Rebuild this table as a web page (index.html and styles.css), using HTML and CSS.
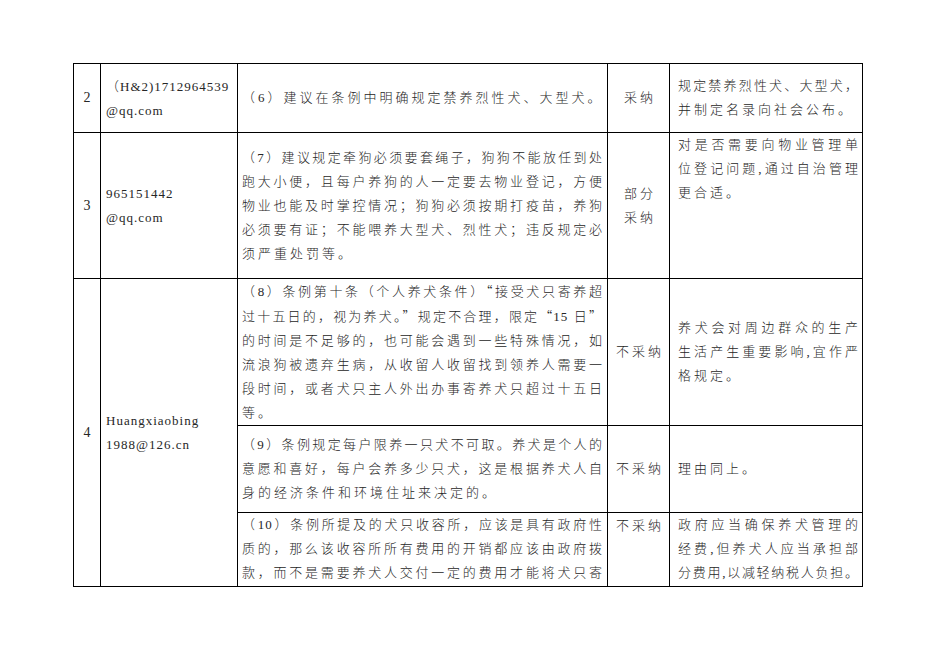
FILE: index.html
```html
<!DOCTYPE html>
<html lang="zh-CN">
<head>
<meta charset="utf-8">
<title>意见采纳情况表</title>
<link rel="stylesheet" href="styles.css">
</head>
<body>
<div class="page">
<table class="grid">
<colgroup>
<col class="c-no"><col class="c-mail"><col class="c-text"><col class="c-res"><col class="c-why">
</colgroup>
<tr class="r-a">
<td class="no">2</td>
<td class="mail"><span class="q">（</span>H&amp;2)1712964539<br>@qq.com</td>
<td class="txt"><span class="ln end">（6）建议在条例中明确规定禁养烈性犬、大型犬。</span></td>
<td class="res">采纳</td>
<td class="why"><span class="ln">规定禁养烈性犬、大型犬，</span><span class="ln end">并制定名录向社会公布。</span></td>
</tr>
<tr class="r-b">
<td class="no">3</td>
<td class="mail">965151442<br>@qq.com</td>
<td class="txt">
<span class="ln">（7）建议规定牵狗必须要套绳子，狗狗不能放任到处</span>
<span class="ln">跑大小便，且每户养狗的人一定要去物业登记，方便</span>
<span class="ln">物业也能及时掌控情况；狗狗必须按期打疫苗，养狗</span>
<span class="ln">必须要有证；不能喂养大型犬、烈性犬；违反规定必</span>
<span class="ln end">须严重处罚等。</span>
</td>
<td class="res">部分<br>采纳</td>
<td class="why top">
<span class="ln">对是否需要向物业管理单</span>
<span class="ln">位登记问题,通过自治管理</span>
<span class="ln end">更合适。</span>
</td>
</tr>
<tr class="r-c">
<td class="no" rowspan="3">4</td>
<td class="mail" rowspan="3">Huangxiaobing<br>1988@126.cn</td>
<td class="txt">
<span class="ln">（8）条例第十条（个人养犬条件）<span class="q">“</span>接受犬只寄养超</span>
<span class="ln">过十五日的，视为养犬。<span class="q">”</span>规定不合理，限定<span class="q">“</span>15 日<span class="q">”</span></span>
<span class="ln">的时间是不足够的，也可能会遇到一些特殊情况，如</span>
<span class="ln">流浪狗被遗弃生病，从收留人收留找到领养人需要一</span>
<span class="ln">段时间，或者犬只主人外出办事寄养犬只超过十五日</span>
<span class="ln end">等。</span>
</td>
<td class="res">不采纳</td>
<td class="why">
<span class="ln">养犬会对周边群众的生产</span>
<span class="ln">生活产生重要影响,宜作严</span>
<span class="ln end">格规定。</span>
</td>
</tr>
<tr class="r-d">
<td class="txt">
<span class="ln">（9）条例规定每户限养一只犬不可取。养犬是个人的</span>
<span class="ln">意愿和喜好，每户会养多少只犬，这是根据养犬人自</span>
<span class="ln end">身的经济条件和环境住址来决定的。</span>
</td>
<td class="res">不采纳</td>
<td class="why"><span class="ln end">理由同上。</span></td>
</tr>
<tr class="r-e">
<td class="txt top">
<span class="ln">（10）条例所提及的犬只收容所，应该是具有政府性</span>
<span class="ln">质的，那么该收容所所有费用的开销都应该由政府拨</span>
<span class="ln">款，而不是需要养犬人交付一定的费用才能将犬只寄</span>
</td>
<td class="res top">不采纳</td>
<td class="why top">
<span class="ln">政府应当确保养犬管理的</span>
<span class="ln">经费,但养犬人应当承担部</span>
<span class="ln">分费用,以减轻纳税人负担。</span>
</td>
</tr>
</table>
</div>
</body>
</html>
```
FILE: styles.css
```css
html, body {
  margin: 0;
  padding: 0;
  background: #ffffff;
}

.page {
  padding: 63px 0 0 73px;
}

.grid {
  border-collapse: collapse;
  table-layout: fixed;
  width: 790px;
  font-family: "Liberation Serif", "Noto Sans CJK SC", serif;
  font-size: 13px;
  font-weight: 300;
  line-height: 24px;
  color: #262626;
}

.c-no { width: 27px; }
.c-mail { width: 137px; }
.c-text { width: 370px; }
.c-res { width: 62px; }
.c-why { width: 193px; }

.grid td {
  border: 1px solid #000;
  padding: 0;
  vertical-align: middle;
  overflow: visible;
}

.r-a { height: 69px; }
.r-b { height: 146px; }
.r-c { height: 147px; }
.r-d { height: 87px; }
.r-e { height: 74px; }

.grid td.top {
  vertical-align: top;
  padding-top: 1px;
}

.no {
  text-align: center;
  font-size: 14px;
  font-weight: 400;
}

.mail {
  padding: 0 2px 0 5px !important;
  font-weight: 400;
  letter-spacing: 1px;
  white-space: nowrap;
}

.txt {
  padding: 0 4px !important;
}

.res {
  text-align: center;
  letter-spacing: 3px;
  padding-left: 3px !important;
}

.why {
  padding: 0 3px 0 8px !important;
}

.ln {
  display: block;
  white-space: nowrap;
  letter-spacing: 1px;
  text-align: justify;
  text-align-last: justify;
}

.ln.end {
  letter-spacing: 3px;
  text-align: left;
  text-align-last: left;
}

.q {
  font-family: "Noto Sans CJK SC", sans-serif;
  font-weight: 300;
}
```
